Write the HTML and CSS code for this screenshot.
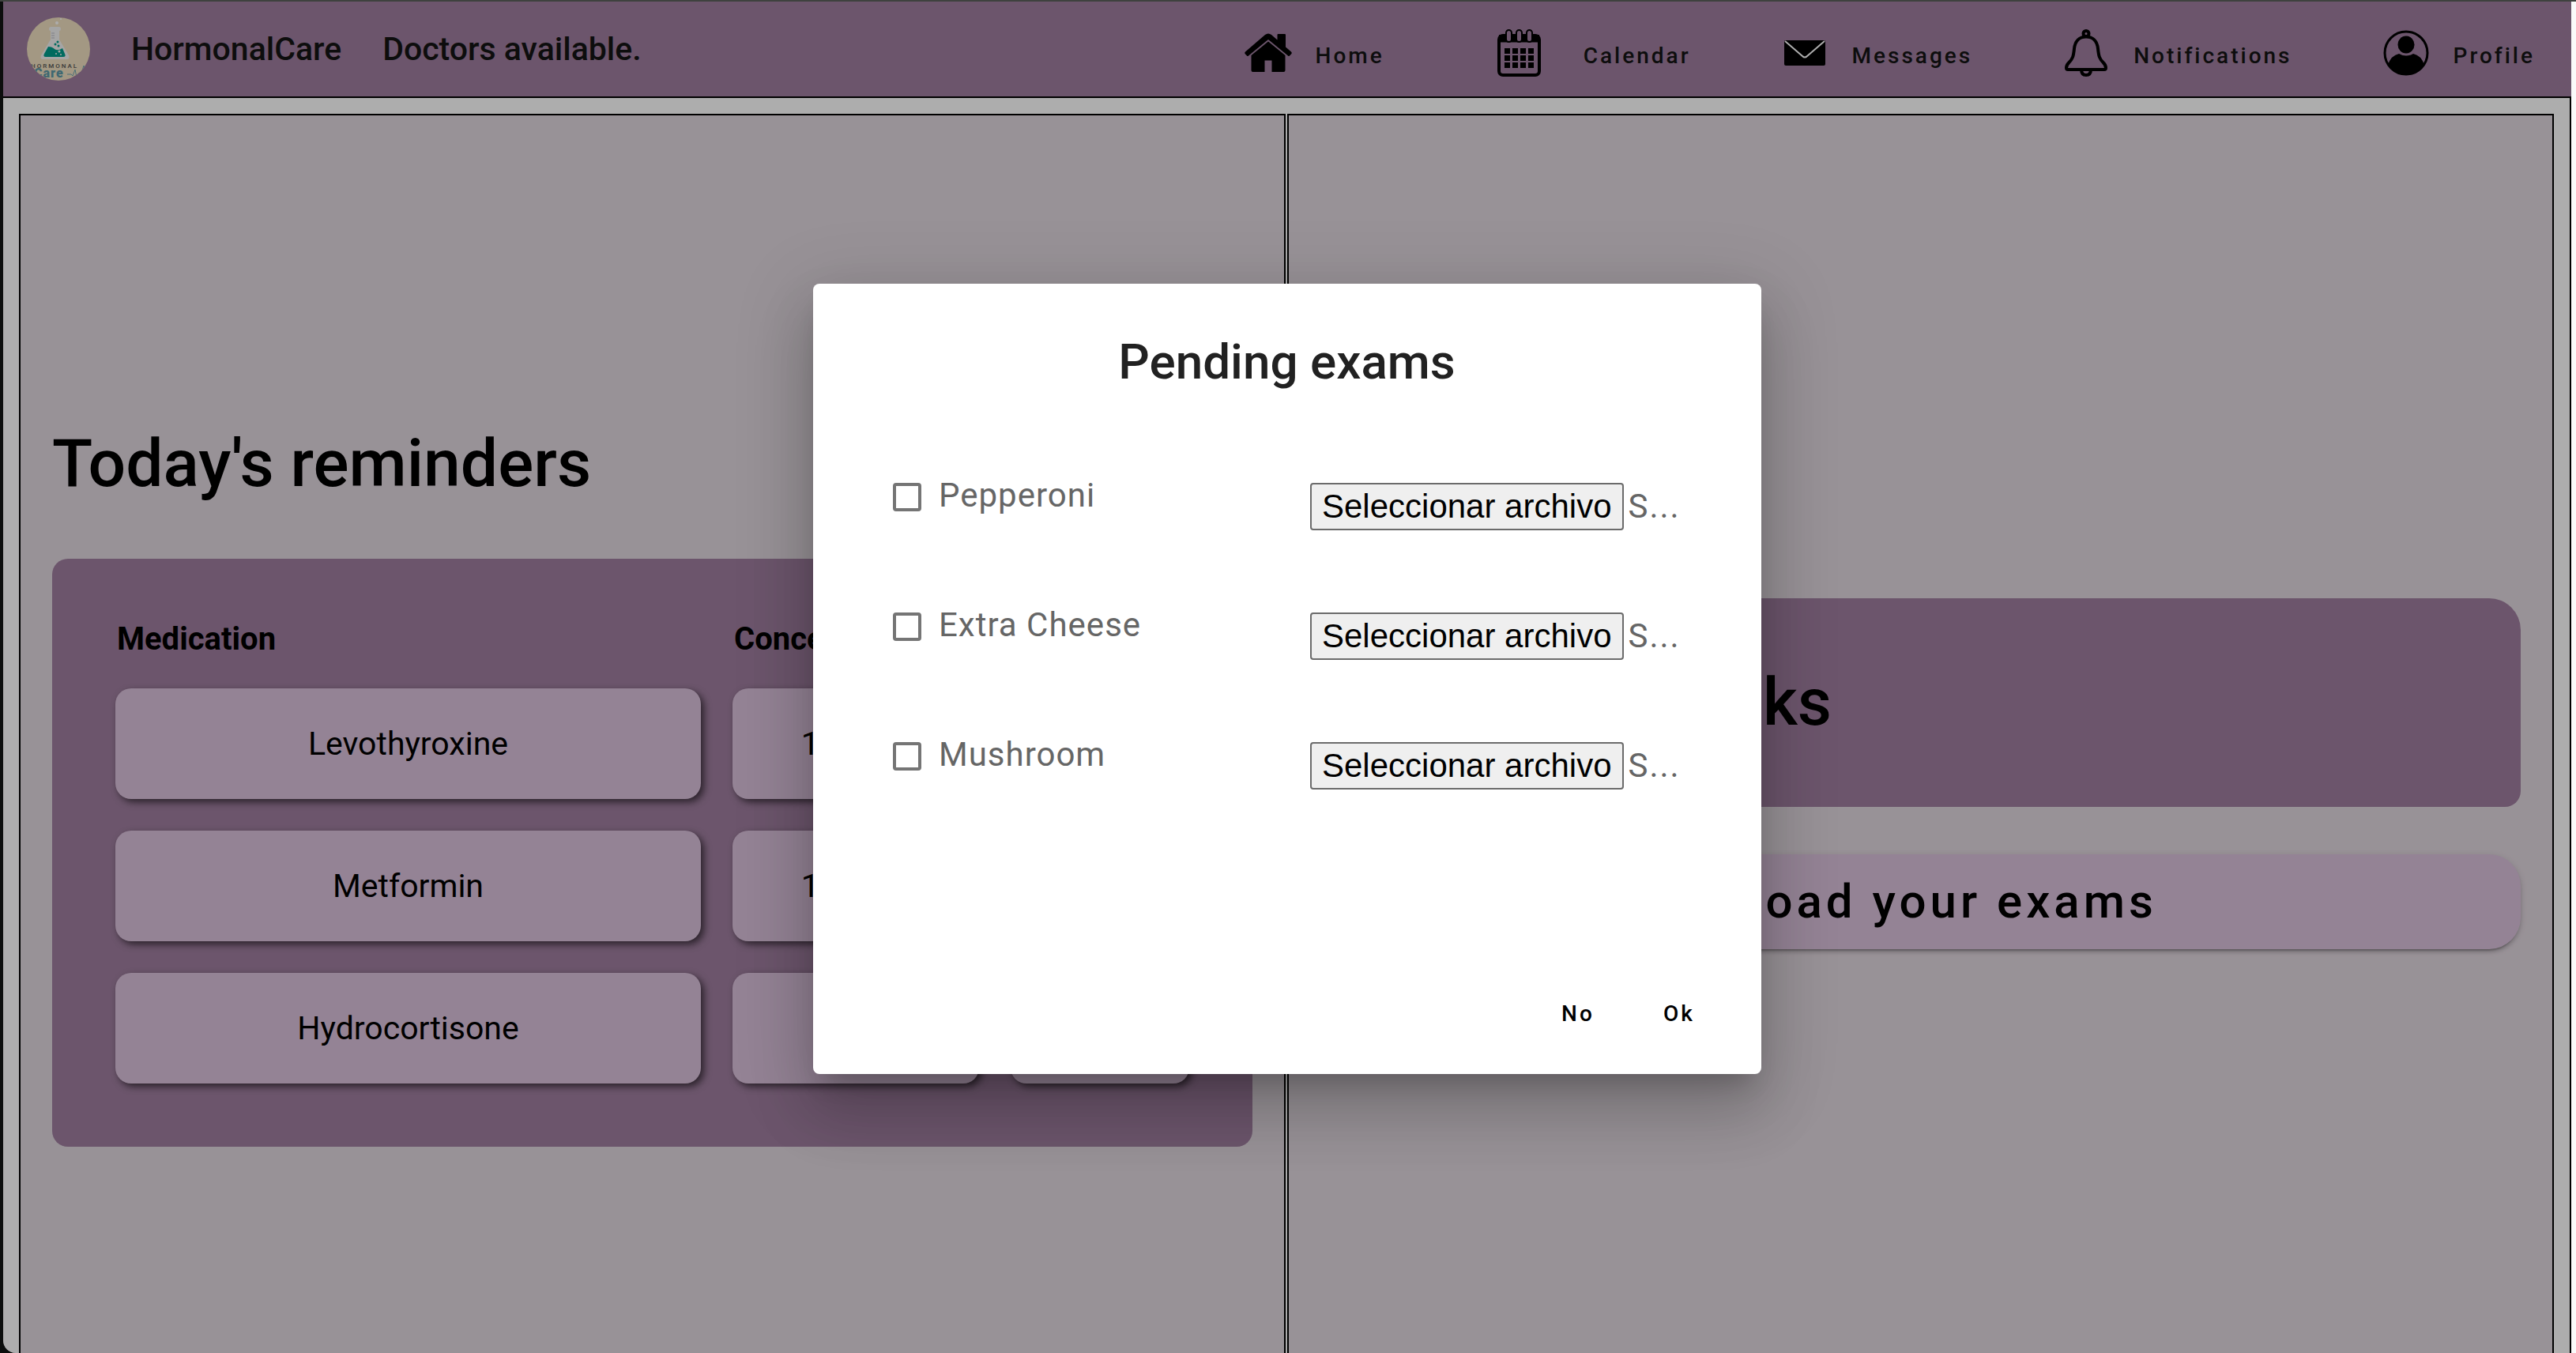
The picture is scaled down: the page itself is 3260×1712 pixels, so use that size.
FILE: index.html
```html
<!DOCTYPE html>
<html lang="en">
<head>
<meta charset="utf-8">
<title>HormonalCare</title>
<link rel="stylesheet" href="styles.css">
</head>
<body>
<div class="app">
  <header class="topbar">
    <svg class="logo" viewBox="0 0 80 80" role="img" aria-label="HormonalCare logo">
      <defs><clipPath id="logo-clip"><circle cx="40" cy="40" r="40"/></clipPath></defs>
      <g clip-path="url(#logo-clip)">
        <rect width="80" height="80" fill="#f0e0c1"/>
        <circle cx="38" cy="7" r="2" fill="#fff"/>
        <circle cx="43" cy="2" r="1" fill="#fff"/>
        <path d="M30 12h11q2 0 2 2.500t-2 2.500v11l12 20q2 5-3 5H21q-5 0-3-5l12-20V17q-2 0-2-2.500t2-2.500z" fill="#f4f4f4"/>
        <path d="M31 20h4M31 23h4M31 26h4" stroke="#b9b9c4" stroke-width="1"/>
        <path d="M27 37q5 0 8 3 4 3 10-1l3 7q2 4-2 4H24q-4 0-2-4z" fill="#009d8c"/>
        <g fill="#009d8c"><circle cx="39" cy="31" r="1.500"/><circle cx="36" cy="34" r="1.500"/><circle cx="40" cy="36" r="1.500"/></g>
        <g fill="#f4f4f4"><circle cx="41" cy="43" r="1.500"/><circle cx="37" cy="46" r="1"/><circle cx="43" cy="47" r="1"/></g>
        <text class="logo-name" x="5" y="64">HORMONAL</text>
        <text class="logo-care" x="9" y="76">Care</text>
        <path d="M51 72h5l2 2 3-8 2 10 2-5h4l3-10 2 8" fill="none" stroke="#6ea5b0" stroke-width="1"/>
      </g>
    </svg>
    <span class="brand">HormonalCare</span>
    <span class="tagline">Doctors available.</span>
    <nav class="nav">
      <a class="nav-item nav-home" href="#">
        <svg class="nav-icon" viewBox="0 0 60 60" aria-hidden="true">
          <path d="M1 28.500 26 7q4-3 8 0l7.500 6.500V7q0-1 1-1h8.500q1 0 1 1v15.500l7 6q1.500 1.500 0 3l-2 2q-1 1-2 0L30 13 5 33.500q-1 1-2 0l-2-2q-1.500-1.500 0-3z"/>
          <path d="M30 15.500 51.500 33v19q0 2-2 2H34.500V39.500h-9V54H10.500q-2 0-2-2V33z"/>
        </svg>
        <span class="nav-label">Home</span>
      </a>
      <a class="nav-item nav-calendar" href="#">
        <svg class="nav-icon" viewBox="0 0 60 60" aria-hidden="true">
          <rect x="5" y="8" width="51" height="50" rx="5" fill="none" stroke="#000" stroke-width="4"/>
          <path d="M5 7h51v9.500H5z"/>
          <g fill="#9f7e9f" stroke="#000" stroke-width="2"><rect x="14" y="1" width="7" height="15" rx="3.500"/><rect x="27" y="1" width="7" height="15" rx="3.500"/><rect x="40" y="1" width="7" height="15" rx="3.500"/></g>
          <path d="M12 24h7v7h-7zM22 24h7v7h-7zM32 24h7v7h-7zM42 24h7v7h-7zM12 33h7v7h-7zM22 33h7v7h-7zM32 33h7v7h-7zM42 33h7v7h-7zM12 42h7v7h-7zM22 42h7v7h-7zM32 42h7v7h-7zM42 42h7v7h-7z"/>
        </svg>
        <span class="nav-label">Calendar</span>
      </a>
      <a class="nav-item" href="#">
        <svg class="nav-icon" viewBox="0 0 60 60" aria-hidden="true">
          <rect x="4" y="14" width="52" height="32" rx="2"/>
          <path d="M5 15 27 34q3 3 6 0L55 15" fill="none" stroke="#fff" stroke-width="2"/>
        </svg>
        <span class="nav-label">Messages</span>
      </a>
      <a class="nav-item" href="#">
        <svg class="nav-icon" viewBox="0 0 60 60" aria-hidden="true">
          <g fill="none" stroke="#000" stroke-width="4">
            <circle cx="30" cy="5.500" r="3.500"/>
            <path d="M30 9.500c-9 0-14 6-15 15-1 10-2 13-7 18q-3 3-3 6.500 0 2 2 2h46q2 0 2-2 0-3.500-3-6.500c-5-5-6-8-7-18-1-9-6-15-15-15z"/>
            <path d="M24 51q0 7 6 7t6-7"/>
          </g>
        </svg>
        <span class="nav-label">Notifications</span>
      </a>
      <a class="nav-item" href="#">
        <svg class="nav-icon" viewBox="0 0 60 60" aria-hidden="true">
          <circle cx="30" cy="30" r="27" fill="none" stroke="#000" stroke-width="3"/>
          <ellipse cx="30" cy="19.500" rx="10.500" ry="11"/>
          <path d="M21 31q9 5 18 0 10 2 14 14-9 13-23 13T7 45q4-12 14-14z"/>
        </svg>
        <span class="nav-label">Profile</span>
      </a>
    </nav>
  </header>

  <main class="content">
    <section class="column">
      <h1 class="heading">Today's reminders</h1>
      <div class="reminders">
        <table class="meds">
          <colgroup><col><col class="col-dose"><col class="col-time"></colgroup>
          <thead><tr><th>Medication</th><th>Concentration</th><th>Hour</th></tr></thead>
          <tbody>
            <tr><td>Levothyroxine</td><td>100 mg</td><td>8:00</td></tr>
            <tr><td>Metformin</td><td>150 mg</td><td>12:00</td></tr>
            <tr><td>Hydrocortisone</td><td>5 mg</td><td>18:00</td></tr>
          </tbody>
        </table>
      </div>
    </section>
    <section class="column">
      <div class="tasks"><h2 class="tasks-title">Upcoming tasks</h2></div>
      <button class="upload" type="button">Upload your exams</button>
    </section>
  </main>

  <div class="backdrop">
    <div class="dialog" role="dialog" aria-modal="true" aria-labelledby="dialog-title">
      <h2 class="dialog-title" id="dialog-title">Pending exams</h2>
      <div class="exams">
        <div class="exam">
          <label class="check"><input class="check-box" type="checkbox"><span>Pepperoni</span></label>
          <label class="file"><input class="file-input" type="file"><span class="file-button">Seleccionar archivo</span><span>S...</span></label>
        </div>
        <div class="exam">
          <label class="check"><input class="check-box" type="checkbox"><span>Extra Cheese</span></label>
          <label class="file"><input class="file-input" type="file"><span class="file-button">Seleccionar archivo</span><span>S...</span></label>
        </div>
        <div class="exam">
          <label class="check"><input class="check-box" type="checkbox"><span>Mushroom</span></label>
          <label class="file"><input class="file-input" type="file"><span class="file-button">Seleccionar archivo</span><span>S...</span></label>
        </div>
      </div>
      <div class="actions">
        <button class="action" type="button">No</button>
        <button class="action" type="button">Ok</button>
      </div>
    </div>
  </div>
</div>
</body>
</html>
```
FILE: styles.css
```css
* { box-sizing: border-box; }

html { background: #0c0e0d; }

body {
  margin: 0;
  height: 100vh;
  overflow: hidden;
  border-top: 2px solid #3e413e;
  font-family: Roboto, "Liberation Sans", sans-serif;
  color: #000;
  background: linear-gradient(to left, #fafafa 50%, #0c0e0d 50%);
}

.app {
  position: relative;
  height: 100%;
  margin: 0 6px 0 4px;
  overflow: hidden;
  border-bottom-left-radius: 16px;
  background: #fff;
}

.topbar {
  display: flex;
  align-items: center;
  height: 122px;
  padding: 0 46px 0 30px;
  border-bottom: 2px solid #000;
  background: #9f7e9f;
  color: #141414;
  font-weight: 500;
}

.logo { width: 80px; height: 80px; }
.logo-name { font-size: 8px; font-weight: 500; letter-spacing: 2px; fill: #555; }
.logo-care { font-size: 16px; font-weight: 900; letter-spacing: 1px; fill: #5e9aa8; }

.brand, .tagline {
  margin-left: 52px;
  font-size: 41px;
  line-height: 46px;
}

.nav {
  display: flex;
  gap: 114px;
  margin-left: auto;
  padding-top: 10px;
}
.nav-item {
  display: flex;
  align-items: center;
  gap: 30px;
  color: inherit;
  text-decoration: none;
}
.nav-home { margin-right: 26px; }
.nav-calendar { gap: 52px; }
.nav-icon { width: 60px; height: 60px; }
.nav-label {
  padding-top: 8px;
  font-size: 28px;
  line-height: 32px;
  letter-spacing: 3px;
}

.content {
  display: grid;
  grid-template-columns: 1fr 1fr;
  gap: 2px;
  padding: 20px;
  border-right: 2px solid #000;
}
.column {
  display: flex;
  flex-direction: column;
  justify-content: center;
  min-height: calc(100vh - 42px);
  padding: 0 40px;
  border: 2px solid #000;
  background: #e1d7df;
}
.heading {
  margin: 30px 0 70px;
  font-size: 84px;
  font-weight: 500;
  line-height: 100px;
}
.reminders {
  padding: 40px;
  border-radius: 20px;
  background: #9f7e9f;
}
.meds {
  width: 100%;
  table-layout: fixed;
  border-collapse: separate;
  border-spacing: 40px;
  font-size: 41px;
  line-height: 44px;
}
.meds th {
  padding: 0 0 0 2px;
  text-align: left;
  font-size: 40px;
  font-weight: 700;
  white-space: nowrap;
}
.meds td {
  height: 140px;
  padding: 0;
  border-radius: 20px;
  background: #dbc2dc;
  text-align: center;
  box-shadow: 4px 4px 10px rgba(0, 0, 0, 0.6);
}
.col-dose { width: 312px; }
.col-time { width: 226px; }

.tasks {
  padding: 82px 40px;
  border-radius: 40px 40px 20px 20px;
  background: #9f7e9f;
}
.tasks-title {
  margin: 0;
  font-size: 84px;
  font-weight: 500;
  line-height: 100px;
}
.upload {
  height: 120px;
  margin-top: 60px;
  border: 0;
  border-radius: 40px;
  background: #dbc2dc;
  color: #000;
  font: 500 60px/72px Roboto, "Liberation Sans", sans-serif;
  letter-spacing: 5px;
  box-shadow: 0 6px 2px -4px rgba(0, 0, 0, 0.2), 0 4px 4px rgba(0, 0, 0, 0.14), 0 2px 10px rgba(0, 0, 0, 0.12);
}

.backdrop {
  position: absolute;
  inset: 0;
  display: flex;
  align-items: center;
  justify-content: center;
  padding-top: 4px;
  background: rgba(0, 0, 0, 0.32);
}
.dialog {
  display: flex;
  flex-direction: column;
  width: 1200px;
  min-height: 1000px;
  padding: 60px 40px 40px 101px;
  border-radius: 8px;
  background: #fff;
  box-shadow: 0 22px 30px -14px rgba(0, 0, 0, 0.2), 0 48px 76px 6px rgba(0, 0, 0, 0.14), 0 18px 92px 16px rgba(0, 0, 0, 0.12);
}
.dialog-title {
  margin: 0 0 114px;
  padding-right: 62px;
  text-align: center;
  font-size: 62px;
  font-weight: 500;
  line-height: 78px;
  color: #212121;
}
.exams { display: grid; gap: 104px; }
.exam {
  display: grid;
  grid-template-columns: 528px 1fr;
  align-items: start;
  font-size: 42px;
  color: #666;
}
.check {
  display: flex;
  align-items: flex-start;
  gap: 22px;
  line-height: 32px;
  letter-spacing: 1px;
}
.check-box {
  appearance: none;
  width: 36px;
  height: 36px;
  margin: 0;
  border: 4px solid #757575;
  border-radius: 4px;
}
.file {
  position: relative;
  display: flex;
  align-items: center;
  gap: 6px;
  line-height: 60px;
  letter-spacing: 2px;
}
.file-input {
  position: absolute;
  inset: 0;
  opacity: 0;
}
.file-button {
  padding: 0 13px;
  border: 2px solid #6b6b6b;
  border-radius: 4px;
  background: #efefef;
  color: #000;
  font: 42px/56px "Liberation Sans", Arial, sans-serif;
  letter-spacing: 0;
}
.actions {
  display: flex;
  justify-content: flex-end;
  margin-top: auto;
}
.action {
  min-width: 128px;
  height: 72px;
  border: 0;
  background: none;
  color: #000;
  font: 500 28px/32px Roboto, "Liberation Sans", sans-serif;
  letter-spacing: 3px;
}
```
